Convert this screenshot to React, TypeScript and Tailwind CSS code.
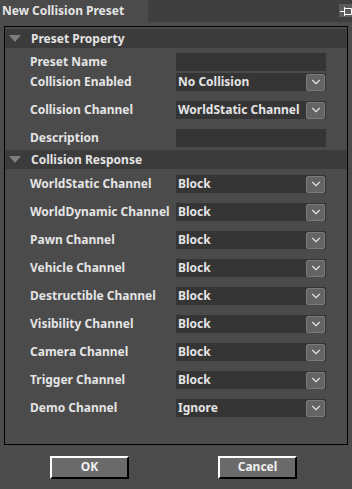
import { ChevronDown } from "lucide-react";

type Row = { label: string; value: string };

const responses: Row[] = [
  { label: "WorldStatic Channel", value: "Block" },
  { label: "WorldDynamic Channel", value: "Block" },
  { label: "Pawn Channel", value: "Block" },
  { label: "Vehicle Channel", value: "Block" },
  { label: "Destructible Channel", value: "Block" },
  { label: "Visibility Channel", value: "Block" },
  { label: "Camera Channel", value: "Block" },
  { label: "Trigger Channel", value: "Block" },
  { label: "Demo Channel", value: "Ignore" },
];

const SectionHeader = ({ title, className }: { title: string; className?: string }) => (
  <div className={`flex h-[19px] items-center bg-[#3b3b3b] ${className ?? ""}`}>
    <svg width="12" height="8" viewBox="0 0 12 8" className="ml-[4px] mr-[10px]">
      <polygon points="0,0 12,0 6,7" fill="#7e7e7e" />
    </svg>
    <span className="text-[12px] font-bold text-[#e4e4e4]">{title}</span>
  </div>
);

const Select = ({ value }: { value: string }) => (
  <div className="flex h-[18px] w-[150px] shrink-0 items-center justify-between bg-[#353535] pl-[2px] pr-[1px]">
    <span className="whitespace-nowrap text-[12px] font-bold text-[#e4e4e4]">{value}</span>
    <div className="flex h-[17px] w-[19px] items-center justify-center rounded-[2px] border border-[#7a7a7a] bg-[#646464]">
      <ChevronDown size={14} strokeWidth={2} color="#e0e0e0" />
    </div>
  </div>
);

const Field = ({
  label,
  children,
  className,
}: {
  label: string;
  children: React.ReactNode;
  className?: string;
}) => (
  <div className={`flex h-[18px] items-center ${className ?? ""}`}>
    <span className="w-[171px] shrink-0 whitespace-nowrap pl-[25px] text-[12px] font-bold text-[#e4e4e4]">
      {label}
    </span>
    {children}
  </div>
);

const DialogButton = ({ label }: { label: string }) => (
  <button className="h-[23px] w-[79px] border-2 border-t-white border-l-white border-b-black border-r-black bg-[#6a6a6a] text-[12px] font-bold text-[#f0f0f0]">
    {label}
  </button>
);

export default function App() {
  return (
    <div
      className="flex h-[489px] w-[352px] flex-col bg-[#4b4b4b] text-[#e4e4e4]"
      style={{ fontFamily: '"Noto Sans", "Open Sans", sans-serif' }}
    >
      <div className="flex h-[22px] items-start bg-[#3f3f3f]">
        <div className="flex h-[22px] w-[148px] items-center bg-[#4b4b4b] pl-[2px] text-[12px] font-bold">
          New Collision Preset
        </div>
        <div className="ml-auto mt-[4px] flex h-[13px] w-[13px] items-center justify-center bg-[#5c5c5c]">
          <svg width="12" height="10" viewBox="0 0 12 10" fill="none" stroke="#ffffff" strokeWidth="1">
            <path d="M0 5.5H4.5M4.5 1V10M4.5 2.5H11.5V8.5H4.5" />
          </svg>
        </div>
      </div>

      <div className="mx-[4px] mt-[4px] h-[419px] border border-black pt-[2px]">
        <SectionHeader title="Preset Property" />
        <Field label="Preset Name" className="mt-[5px]">
          <div className="h-[18px] w-[150px] shrink-0 bg-[#353535]" />
        </Field>
        <Field label="Collision Enabled" className="mt-[2px]">
          <Select value="No Collision" />
        </Field>
        <Field label="Collision Channel" className="mt-[10px]">
          <Select value="WorldStatic Channel" />
        </Field>
        <Field label="Description" className="mt-[10px]">
          <div className="h-[18px] w-[150px] shrink-0 bg-[#353535]" />
        </Field>
        <SectionHeader title="Collision Response" className="mt-[3px]" />
        {responses.map((r, i) => (
          <Field key={r.label} label={r.label} className={i === 0 ? "mt-[6px]" : "mt-[10px]"}>
            <Select value={r.value} />
          </Field>
        ))}
      </div>

      <div className="mt-[8px] flex">
        <div className="ml-[50px]">
          <DialogButton label="OK" />
        </div>
        <div className="ml-[89px]">
          <DialogButton label="Cancel" />
        </div>
      </div>
    </div>
  );
}
